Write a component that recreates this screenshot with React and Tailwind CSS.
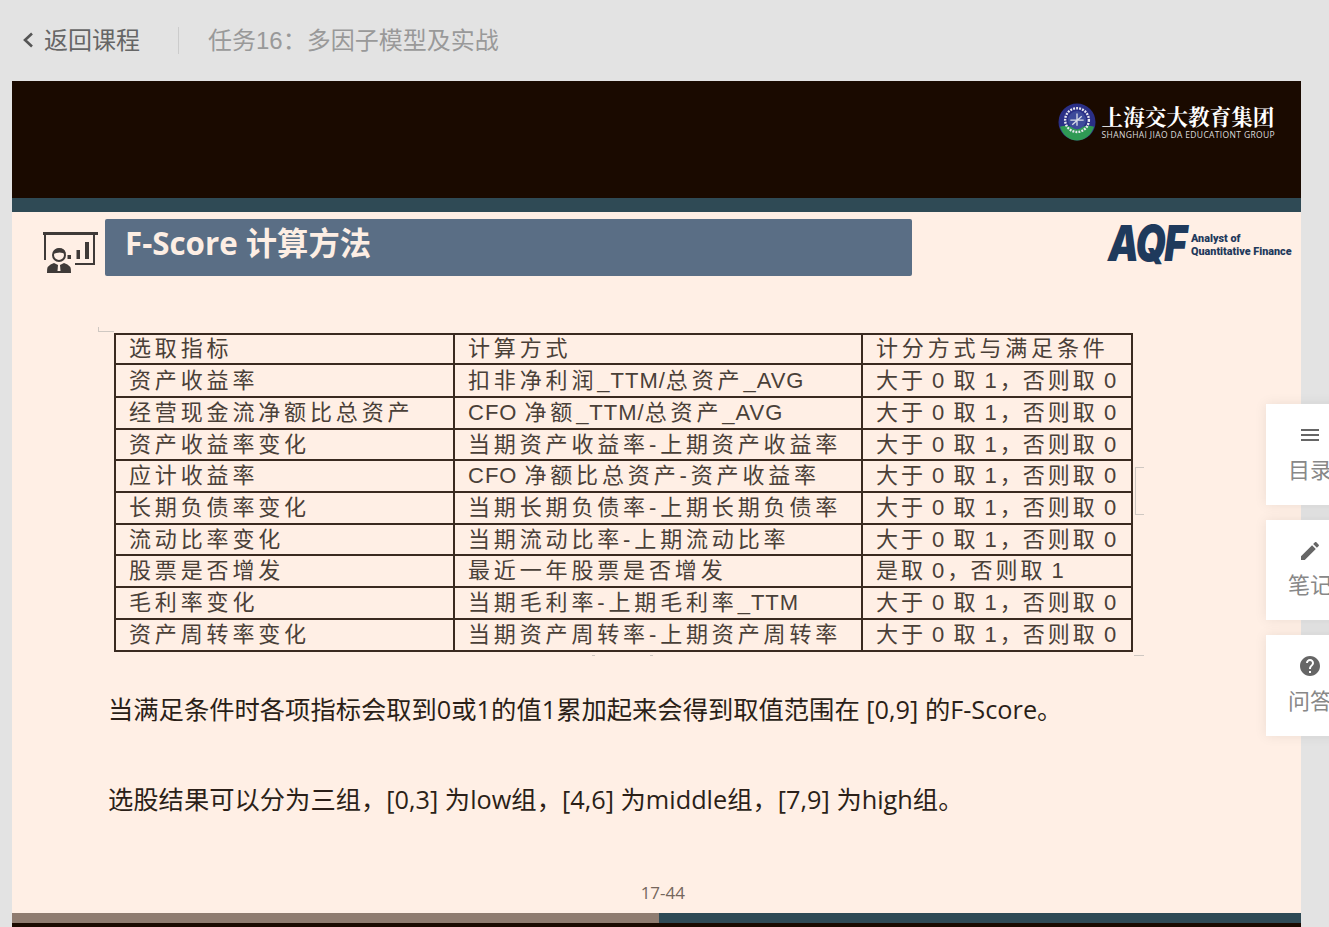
import React from 'react'

const cjk = "font-['Liberation_Sans','Noto_Sans_CJK_SC',sans-serif]"

const cond = '大于 0 取 1，否则取 0'

const rows = [
    { h: 'h-[30px]', cells: ['选取指标', '计算方式', '计分方式与满足条件'] },
    { h: 'h-[33px]', cells: ['资产收益率', '扣非净利润_TTM/总资产_AVG', cond] },
    { h: 'h-[32px]', cells: ['经营现金流净额比总资产', 'CFO 净额_TTM/总资产_AVG', cond] },
    { h: 'h-[31px]', cells: ['资产收益率变化', '当期资产收益率-上期资产收益率', cond] },
    { h: 'h-[32px]', cells: ['应计收益率', 'CFO 净额比总资产-资产收益率', cond] },
    { h: 'h-[32px]', cells: ['长期负债率变化', '当期长期负债率-上期长期负债率', cond] },
    { h: 'h-[31px]', cells: ['流动比率变化', '当期流动比率-上期流动比率', cond] },
    { h: 'h-[32px]', cells: ['股票是否增发', '最近一年股票是否增发', '是取 0，否则取 1'] },
    { h: 'h-[32px]', cells: ['毛利率变化', '当期毛利率-上期毛利率_TTM', cond] },
    { h: 'h-[32px]', cells: ['资产周转率变化', '当期资产周转率-上期资产周转率', cond] },
]

// latin runs sit tighter than the spaced-out chinese, the comma eats less room
const Cell = ({ text }) => text.split(/([A-Za-z_/]+|，)/).map((part, i) => {
    if (part === '，') return <span key={i} className="tracking-[1px]">，</span>
    if (/^[A-Za-z_/]+$/.test(part)) return <span key={i} className="tracking-[1px]">{part}</span>
    return part
})

const Emblem = () => (
    <svg width="38" height="38" viewBox="0 0 40 40">
        <circle cx="20" cy="20" r="19.5" fill="#2a2f86" />
        <path d="M2 25 Q12 22 20 28 Q28 22 38 25 Q33 39 20 39.5 Q7 39 2 25Z" fill="#2f9a55" />
        <circle cx="20" cy="18" r="12.5" fill="none" stroke="#e8e8f0" strokeWidth="2.5" strokeDasharray="2 1.2" />
        <circle cx="20" cy="18" r="9.5" fill="#3d4a9a" />
        <path d="M13 18h14M20 11v13M15 23l10-9" stroke="#d8dbe8" strokeWidth="1.4" />
    </svg>
)

const Presenter = () => (
    <svg width="56" height="41" viewBox="0 0 56 41" fill="#3f3a38">
        <rect x="1" y="0" width="55" height="3" />
        <rect x="2" y="3" width="2" height="25" />
        <rect x="51" y="3" width="2" height="30" />
        <rect x="33" y="31" width="20" height="2" />
        <rect x="25.5" y="23" width="3.5" height="4" />
        <rect x="34.5" y="18" width="3.5" height="9" />
        <rect x="43" y="10" width="4" height="17" />
        <circle cx="17" cy="23" r="6" fill="none" stroke="#3f3a38" strokeWidth="2" />
        <path d="M11 22 Q13 15 20 16.5 Q24 18 23.5 22 Q18 19 11 22Z" />
        <path d="M5 41 Q4 33 12 31 L16 33 L18 33 L22 31 Q30 33 29 41Z" />
        <path d="M16 33h2l.5 6h-3z" fill="#fff0e6" />
    </svg>
)

const SideTab = ({ icon, label, className }) => (
    <div className={`absolute left-[1266px] w-[88px] flex flex-col items-center bg-white shadow-[0_0_12px_rgba(0,0,0,0.08)] text-[22px] leading-[30px] text-[#888] ${className}`}>
        {icon}
        <span className="whitespace-nowrap">{label}</span>
    </div>
)

const Mark = ({ className }) => <div className={`absolute border-[#cfc8c2] ${className}`} />

const App = () => {
    return (
        <div className={`relative h-[927px] w-full overflow-hidden bg-[#e3e3e3] ${cjk}`}>
            <header className="flex h-[81px] items-center pl-[21px]">
                <svg width="14" height="18" viewBox="0 0 14 18" fill="none" stroke="#555" strokeWidth="2.6" className="-mt-[2px] mr-[9px]">
                    <path d="M11 2.5 L4 9 L11 15.5" />
                </svg>
                <span className="text-[24px] text-[#666]">返回课程</span>
                <div className="ml-[38px] mr-[29px] h-[27px] w-px bg-[#ccc]" />
                <span className="text-[24px] text-[#999]">任务16：多因子模型及实战</span>
            </header>

            <div className="ml-[12px] flex h-[846px] w-[1289px] flex-col bg-[#ffefe5]">
                <div className="flex h-[117px] items-start justify-end bg-[#1a0a00] pr-[26px] pt-[22px]">
                    <div className="flex items-center gap-[6px]">
                        <Emblem />
                        <div className="flex flex-col text-white">
                            <span className="mt-[2px] font-['Liberation_Serif','Noto_Serif_CJK_SC','Noto_Sans_CJK_SC',serif] text-[21.6px] font-bold leading-[23px]">上海交大教育集团</span>
                            <span className="font-['Open_Sans',sans-serif] text-[8.5px] leading-[10px] tracking-[0.35px] text-[#ddd]">SHANGHAI JIAO DA EDUCATIONT GROUP</span>
                        </div>
                    </div>
                </div>
                <div className="h-[14px] shrink-0 bg-[#2f4a55]" />

                <div className="mt-[7px] flex h-[57px] items-center">
                    <div className="ml-[30px] mr-[7px] mt-[10px] shrink-0"><Presenter /></div>
                    <div className="flex h-[57px] w-[807px] shrink-0 items-center rounded-[2px] bg-[#5a6e85] pb-[8px] pl-[20px] font-['Open_Sans','Noto_Sans_CJK_SC',sans-serif] text-[31.3px] font-bold text-[#fdeee4]">
                        F-Score 计算方法
                    </div>
                    <div className="ml-[196px] flex items-center pb-[10px] text-[#1f3a5c]">
                        <div className="w-[83px] shrink-0">
                            <span className="block origin-left scale-x-[0.78] font-['Inter',sans-serif] text-[50px] font-black italic leading-none tracking-[-2px]">AQF</span>
                        </div>
                        <div className="flex flex-col pt-[4px] font-['Roboto',sans-serif] text-[10.8px] font-black leading-[13px]">
                            <span>Analyst of</span>
                            <span className="whitespace-nowrap">Quantitative Finance</span>
                        </div>
                    </div>
                </div>

                <table className="ml-[102px] mt-[57px] w-[1017px] table-fixed border-collapse border-2 border-[#3a2a20] text-[22px] tracking-[3.85px] text-[#4a4038] [word-spacing:-3px]">
                    <colgroup>
                        <col className="w-[339px]" />
                        <col className="w-[408px]" />
                        <col className="w-[270px]" />
                    </colgroup>
                    <tbody>
                        {rows.map((row, i) => (
                            <tr key={i} className={row.h}>
                                {row.cells.map((cell, j) => (
                                    <td key={j} className={`whitespace-nowrap border-2 border-[#3a2a20] py-0 pl-[13px] leading-none ${j === 2 && i > 0 ? 'tracking-[3px]' : ''}`}><Cell text={cell} /></td>
                                ))}
                            </tr>
                        ))}
                    </tbody>
                </table>

                <p className="ml-[96px] mt-[41px] whitespace-nowrap font-['Open_Sans','Noto_Sans_CJK_SC',sans-serif] text-[25.3px] leading-[32px] text-[#2b1f18]">当满足条件时各项指标会取到0或1的值1累加起来会得到取值范围在 [0,9] 的F-Score。</p>
                <p className="ml-[96px] mt-[58px] whitespace-nowrap font-['Open_Sans','Noto_Sans_CJK_SC',sans-serif] text-[25.3px] leading-[32px] text-[#2b1f18]">选股结果可以分为三组，[0,3] 为low组，[4,6] 为middle组，[7,9] 为high组。</p>

                <div className="mt-auto flex justify-end pb-[10px] pr-[616px] font-['Open_Sans',sans-serif] text-[17px] leading-[20px] text-[#75665c]">17-44</div>
                <div className="flex h-[10px] shrink-0">
                    <div className="w-[647px] bg-[#8f7c70]" />
                    <div className="flex-1 bg-[#2f4a55]" />
                </div>
                <div className="h-[4px] shrink-0 bg-[#1a0a00]" />
            </div>

            <Mark className="left-[98px] top-[327px] h-[5px] w-[16px] border-b border-l" />
            <Mark className="left-[1135px] top-[467px] h-[48px] w-[9px] border-y border-l" />
            <Mark className="left-[1134px] top-[651px] h-[5px] w-[10px] border-b" />
            <Mark className="left-[592px] top-[655px] h-px w-[3px] border-t" />
            <Mark className="left-[650px] top-[655px] h-px w-[3px] border-t" />

            <SideTab
                className="top-[404px] h-[101px] pt-[19px]"
                label="目录"
                icon={
                    <svg width="24" height="24" viewBox="0 0 24 24" fill="#666" className="mb-[9px]">
                        <path d="M3 18h18v-2H3v2zm0-5h18v-2H3v2zm0-7v2h18V6H3z" />
                    </svg>
                }
            />
            <SideTab
                className="top-[520px] h-[100px] pt-[19px]"
                label="笔记"
                icon={
                    <svg width="24" height="24" viewBox="0 0 24 24" fill="#666" className="mb-[8px]">
                        <path d="M3 17.25V21h3.75L17.81 9.94l-3.75-3.75L3 17.25zM20.71 7.04c.39-.39.39-1.02 0-1.41l-2.34-2.34c-.39-.39-1.02-.39-1.41 0l-1.83 1.83 3.75 3.75 1.83-1.83z" />
                    </svg>
                }
            />
            <SideTab
                className="top-[635px] h-[101px] pt-[19px]"
                label="问答"
                icon={
                    <svg width="24" height="24" viewBox="0 0 24 24" fill="#666" className="mb-[9px]">
                        <path d="M12 2C6.48 2 2 6.48 2 12s4.48 10 10 10 10-4.48 10-10S17.52 2 12 2zm1 17h-2v-2h2v2zm2.07-7.75l-.9.92C13.45 12.9 13 13.5 13 15h-2v-.5c0-1.1.45-2.1 1.17-2.83l1.24-1.26c.37-.36.59-.86.59-1.41 0-1.1-.9-2-2-2s-2 .9-2 2H8c0-2.21 1.79-4 4-4s4 1.79 4 4c0 .88-.36 1.68-.93 2.25z" />
                    </svg>
                }
            />
        </div>
    )
}

export default App
